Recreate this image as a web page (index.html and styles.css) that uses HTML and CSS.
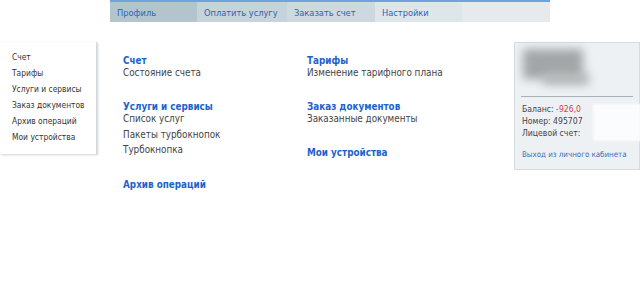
FILE: index.html
```html
<!DOCTYPE html>
<html lang="ru">
<head>
<meta charset="utf-8">
<title>Личный кабинет</title>
<link rel="stylesheet" href="styles.css">
</head>
<body>
<nav class="topnav">
  <a class="tab tab1">Профиль</a>
  <a class="tab tab2">Оплатить услугу</a>
  <a class="tab tab3">Заказать счет</a>
  <a class="tab tab4">Настройки</a>
  <span class="tab tab5"></span>
</nav>
<div class="page">
  <ul class="sidemenu">
    <li>Счет</li>
    <li>Тарифы</li>
    <li>Услуги и сервисы</li>
    <li>Заказ документов</li>
    <li>Архив операций</li>
    <li>Мои устройства</li>
  </ul>
  <main class="sitemap">
    <div class="col">
      <section class="group">
        <h3>Счет</h3>
        <p>Состояние счета</p>
      </section>
      <section class="group">
        <h3>Услуги и сервисы</h3>
        <p>Список услуг</p>
        <p>Пакеты турбокнопок</p>
        <p>Турбокнопка</p>
      </section>
      <section class="group">
        <h3>Архив операций</h3>
      </section>
    </div>
    <div class="col">
      <section class="group">
        <h3>Тарифы</h3>
        <p>Изменение тарифного плана</p>
      </section>
      <section class="group">
        <h3>Заказ документов</h3>
        <p>Заказанные документы</p>
      </section>
      <section class="group">
        <h3>Мои устройства</h3>
      </section>
    </div>
  </main>
  <aside class="account">
    <div class="blurname"><span class="b1"></span><span class="b2"></span></div>
    <div class="info">
      <div class="lines">
        <div>Баланс: <span class="neg">-926,0</span></div>
        <div>Номер: 495707</div>
        <div>Лицевой счет:</div>
      </div>
      <span class="mask"></span>
    </div>
    <a class="logout">Выход из личного кабинета</a>
  </aside>
</div>
</body>
</html>
```

FILE: styles.css
```css
html, body { margin: 0; padding: 0; background: #fff; }
body { font-family: "DejaVu Sans Condensed", "DejaVu Sans", Verdana, sans-serif; font-stretch: semi-condensed; font-size: 10px; color: #444; }

.topnav { display: flex; margin-left: 110px; width: 440px; height: 22px; border-top: 2px solid #6fa2e0; box-sizing: border-box; }
.tab { width: 88px; height: 20px; line-height: 21px; padding-left: 7px; box-sizing: border-box; color: #2c64b8; font-size: 9.2px; white-space: nowrap; }
.tab1 { background: #b4c4cd; width: 87px; }
.tab2 { background: #c6d3da; width: 90px; }
.tab3 { background: #ced9df; }
.tab4 { background: #dfe6ea; width: 87px; }
.tab5 { background: #e7eaec; }

.page { display: flex; align-items: flex-start; margin-top: 20px; }

.sidemenu { list-style: none; margin: 0; padding: 7px 0 9px 12px; width: 97px; box-sizing: border-box; background: #fff;
  border-right: 1px solid #d3d8dc; box-shadow: 1px 1px 2px rgba(0,0,0,0.18); }
.sidemenu li { height: 16px; line-height: 16px; font-size: 8.4px; color: #333; white-space: nowrap; }

.sitemap { display: flex; padding-left: 26px; padding-top: 13px; }
.col { width: 184px; }
.group { margin-bottom: 22px; }
.group h3 { margin: 0; font-size: 9.8px; font-weight: bold; color: #1e63c9; line-height: 12px; }
.group p { margin: 0; font-size: 9.8px; line-height: 16px; color: #444; }
.group h3 + p { line-height: 12px; margin-bottom: 2px; }
.group p:last-child { line-height: 14px; }
.group h3 + p:last-child { line-height: 12px; }

.account { margin-left: auto; width: 126px; height: 128px; box-sizing: border-box; background: #edf1f4; border: 1px solid #d5dce2;
  padding: 0 6px; position: relative; }
.blurname { height: 53px; border-bottom: 1px solid #a9b0b6; position: relative; }
.b1 { position: absolute; left: 2px; top: 6px; width: 60px; height: 30px; background: #a3a6a8; filter: blur(5px); }
.b2 { position: absolute; left: 22px; top: 30px; width: 46px; height: 12px; background: #b6b8ba; filter: blur(5px); }
.info { position: relative; padding: 6px 0 0 1px; }
.lines div { font-size: 8.6px; line-height: 12px; color: #444; white-space: nowrap; }
.neg { color: #e03a3a; }
.mask { position: absolute; left: 72px; top: 7px; width: 48px; height: 37px; background: #fbfcfd; filter: blur(1px); }
.logout { display: block; margin-top: 11px; padding-left: 1px; font-size: 7.9px; color: #3a6dbd; white-space: nowrap; }
```
